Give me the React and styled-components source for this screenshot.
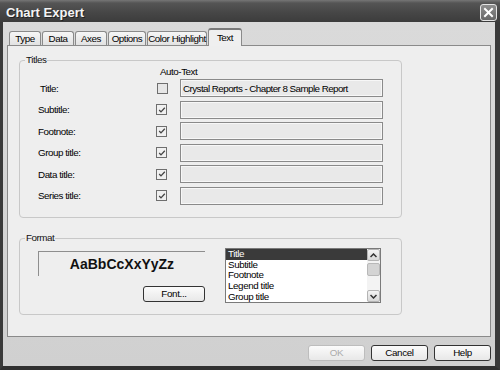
import React from 'react';
import styled, { createGlobalStyle } from 'styled-components';

const Global = createGlobalStyle`
  html, body { margin: 0; padding: 0; background: #d6d6d6; }
  body { font-family: "Liberation Sans", Arial, sans-serif; }
  * { box-sizing: border-box; }
`;

const Window = styled.div`
  width: 500px;
  height: 370px;
  display: flex;
  flex-direction: column;
  overflow: hidden;
  background: #d6d6d6;
`;

const TitleBar = styled.div`
  height: 22px;
  flex: none;
  display: flex;
  align-items: center;
  justify-content: space-between;
  padding: 2px 3px 0 6px;
  background: linear-gradient(#767676 0px, #555 3px, #474747 55%, #3c3c3c 100%);
  color: #f4f4f4;
  font: bold 13px "Liberation Sans", Arial, sans-serif;
  text-shadow: 1px 1px 0 #222;
`;

const CloseButton = styled.div`
  width: 17px;
  height: 17px;
  align-self: flex-end;
  margin-bottom: 1px;
  border: 1px solid #e4e4e4;
  border-radius: 3px;
  background: linear-gradient(#8e8e8e, #676767);
  display: flex;
  align-items: center;
  justify-content: center;
`;

const Frame = styled.div`
  flex: 1;
  display: flex;
  flex-direction: column;
  border-left: 3px solid #3a3a3a;
  border-right: 5px solid #3a3a3a;
  border-bottom: 4px solid #303030;
  background: linear-gradient(#dadada, #d0d0d0);
  padding: 6px 0 5px 0;
`;

const TabStrip = styled.div`
  height: 17px;
  display: flex;
  align-items: flex-end;
  gap: 1px;
  padding-left: 6px;
  position: relative;
  z-index: 1;
`;

const Tab = styled.div`
  width: ${p => p.$w}px;
  height: ${p => (p.$active ? 18 : 14)}px;
  margin-bottom: ${p => (p.$active ? -1 : 0)}px;
  border: 1px solid #8a8a8a;
  border-bottom: none;
  border-top: ${p => (p.$active ? '2px solid #7a7a7a' : '1px solid #8a8a8a')};
  border-radius: 3px 3px 0 0;
  background: ${p => (p.$active ? '#efefef' : 'linear-gradient(#f6f6f6, #e2e2e2)')};
  display: flex;
  align-items: ${p => (p.$active ? 'flex-start' : 'center')};
  padding-top: ${p => (p.$active ? 2 : 0)}px;
  justify-content: center;
  font-size: 9.8px;
  letter-spacing: -0.45px;
  color: #000;
`;

const Panel = styled.div`
  margin: 0 4px;
  height: 292px;
  flex: none;
  border: 1px solid #8a8a8a;
  background: #eeeeee;
  padding: 14px 0 21px 11px;
  display: flex;
  flex-direction: column;
  gap: 20px;
`;

const GroupBox = styled.div`
  position: relative;
  width: 383px;
  height: ${p => p.$h}px;
  border: 1px solid #c8c8c8;
  border-radius: 4px;
`;

const GroupLabel = styled.span`
  position: absolute;
  top: -7px;
  left: 5px;
  padding: 0 1px;
  background: #eeeeee;
  font-size: 9.8px;
  line-height: 12px;
  letter-spacing: -0.45px;
  color: #111;
`;

const TitlesBody = styled.div`
  padding: 5px 0 12px 18px;
`;

const AutoTextHeader = styled.div`
  padding-left: 122px;
  height: 12px;
  line-height: 12px;
  margin-bottom: 1px;
  font-size: 9.8px;
  letter-spacing: -0.45px;
  color: #000;
`;

const TitleGrid = styled.div`
  display: grid;
  grid-template-columns: 119px 23px 203px;
  grid-auto-rows: 18px;
  row-gap: 3.6px;
  align-items: center;
`;

const RowLabel = styled.div`
  padding-left: ${p => p.$indent || 0}px;
  font-size: 9.8px;
  letter-spacing: -0.45px;
  color: #000;
`;

const CheckBox = styled.div`
  width: 11px;
  height: 11px;
  border: 1px solid #6e6e6e;
  background: ${p => (p.$checked ? '#f0f0f0' : '#e6e6e6')};
  display: flex;
  align-items: center;
  justify-content: center;
  margin-left: ${p => (p.$checked ? -1 : 0)}px;
`;

const TextField = styled.div`
  height: 18px;
  border: 1px solid #8a8a8a;
  box-shadow: inset 0 0 0 1px #f7f7f7;
  background: #e9e9e9;
  padding-left: 2px;
  display: flex;
  align-items: center;
  font-size: 9.8px;
  letter-spacing: -0.55px;
  color: #000;
  white-space: nowrap;
`;

const FormatBody = styled.div`
  display: flex;
  gap: 20px;
  padding: 9px 0 0 18px;
`;

const PreviewCol = styled.div`
  width: 167px;
  display: flex;
  flex-direction: column;
  align-items: flex-end;
  padding-top: 3px;
`;

const Preview = styled.div`
  align-self: stretch;
  height: 25px;
  border-top: 1px solid #8e8e8e;
  border-left: 1px solid #8e8e8e;
  display: flex;
  align-items: center;
  justify-content: center;
  font: bold 14px "Liberation Sans", Arial, sans-serif;
  color: #111;
`;

const Button = styled.button`
  width: ${p => p.$w || 57}px;
  height: 16px;
  margin-top: ${p => p.$mt || 0}px;
  padding: 0;
  border: 1px solid ${p => (p.disabled ? '#bdbdbd' : '#333')};
  border-radius: 3px;
  background: linear-gradient(#fbfbfb, #e8e8e8);
  color: ${p => (p.disabled ? '#ababab' : '#000')};
  font-family: "Liberation Sans", Arial, sans-serif;
  font-size: 9.8px;
  letter-spacing: -0.35px;
  line-height: 14px;
`;

const ListBox = styled.div`
  width: 156px;
  height: 55px;
  border: 1px solid #7a7a7a;
  background: #fff;
  display: flex;
`;

const ListItems = styled.div`
  flex: 1;
  overflow: hidden;
`;

const ListItem = styled.div`
  height: 10.7px;
  line-height: 10.7px;
  padding-left: 2px;
  font-size: 9.8px;
  letter-spacing: -0.4px;
  background: ${p => (p.$selected ? '#3a3a3a' : 'transparent')};
  color: ${p => (p.$selected ? '#fff' : '#000')};
  white-space: nowrap;
`;

const ScrollBar = styled.div`
  width: 13px;
  display: flex;
  flex-direction: column;
  background: #f3f3f3;
`;

const ScrollButton = styled.div`
  width: 13px;
  height: 12px;
  border: 1px solid #b4b4b4;
  border-radius: 2px;
  background: linear-gradient(#f4f4f4, #d8d8d8);
  display: flex;
  align-items: center;
  justify-content: center;
  margin-top: ${p => (p.$down ? 'auto' : '0')};
`;

const Thumb = styled.div`
  width: 13px;
  height: 13px;
  margin-top: 2px;
  border: 1px solid #b8b8b8;
  border-radius: 2px;
  background: #d4d4d4;
`;

const ButtonRow = styled.div`
  display: flex;
  justify-content: flex-end;
  gap: 6px;
  margin-top: 8px;
  padding-right: 4px;
`;

const Check = () => (
  <svg width="8" height="8" viewBox="0 0 8 8">
    <path d="M1.2 4 L3 5.9 L6.8 1.8" fill="none" stroke="#444" strokeWidth="1.3" />
  </svg>
);

const Chevron = ({ down }) => (
  <svg width="7" height="5" viewBox="0 0 7 5">
    <path d={down ? 'M0.5 1 L3.5 4 L6.5 1' : 'M0.5 4 L3.5 1 L6.5 4'} fill="none" stroke="#333" strokeWidth="1.5" />
  </svg>
);

const tabs = [
  ['Type', 32],
  ['Data', 32],
  ['Axes', 32],
  ['Options', 38],
  ['Color Highlight', 60],
  ['Text', 34],
];

const rows = [
  { label: 'Title:', checked: false, value: 'Crystal Reports - Chapter 8 Sample Report', indent: 2 },
  { label: 'Subtitle:', checked: true, value: '' },
  { label: 'Footnote:', checked: true, value: '' },
  { label: 'Group title:', checked: true, value: '' },
  { label: 'Data title:', checked: true, value: '' },
  { label: 'Series title:', checked: true, value: '' },
];

const listItems = ['Title', 'Subtitle', 'Footnote', 'Legend title', 'Group title'];

export default function App() {
  return (
    <Window>
      <Global />
      <TitleBar>
        <span>Chart Expert</span>
        <CloseButton>
          <svg width="11" height="11" viewBox="0 0 11 11">
            <path d="M2 2 L9 9 M9 2 L2 9" stroke="#fff" strokeWidth="2" strokeLinecap="square" />
          </svg>
        </CloseButton>
      </TitleBar>
      <Frame>
        <TabStrip>
          {tabs.map(([t, w]) => (
            <Tab key={t} $w={w} $active={t === 'Text'}>{t}</Tab>
          ))}
        </TabStrip>
        <Panel>
          <GroupBox $h={158}>
            <GroupLabel>Titles</GroupLabel>
            <TitlesBody>
              <AutoTextHeader>Auto-Text</AutoTextHeader>
              <TitleGrid>
                {rows.map(r => (
                  <React.Fragment key={r.label}>
                    <RowLabel $indent={r.indent}>{r.label}</RowLabel>
                    <CheckBox $checked={r.checked}>{r.checked && <Check />}</CheckBox>
                    <TextField>{r.value}</TextField>
                  </React.Fragment>
                ))}
              </TitleGrid>
            </TitlesBody>
          </GroupBox>
          <GroupBox $h={77}>
            <GroupLabel>Format</GroupLabel>
            <FormatBody>
              <PreviewCol>
                <Preview>AaBbCcXxYyZz</Preview>
                <Button $w={62} $mt={10}>Font...</Button>
              </PreviewCol>
              <ListBox>
                <ListItems>
                  {listItems.map((it, i) => (
                    <ListItem key={it} $selected={i === 0}>{it}</ListItem>
                  ))}
                </ListItems>
                <ScrollBar>
                  <ScrollButton><Chevron /></ScrollButton>
                  <Thumb />
                  <ScrollButton $down><Chevron down /></ScrollButton>
                </ScrollBar>
              </ListBox>
            </FormatBody>
          </GroupBox>
        </Panel>
        <ButtonRow>
          <Button disabled>OK</Button>
          <Button>Cancel</Button>
          <Button>Help</Button>
        </ButtonRow>
      </Frame>
    </Window>
  );
}
